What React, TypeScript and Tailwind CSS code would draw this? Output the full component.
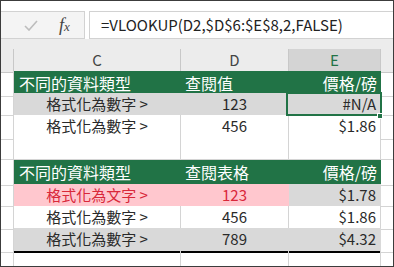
import React from "react";

const Row: React.FC<{ h: string; children: React.ReactNode }> = ({ h, children }) => (
  <div className={`grid grid-cols-[13px_167px_108px_92px_12px] ${h}`}>{children}</div>
);

const Edge: React.FC<{ left?: boolean; bottom?: boolean }> = ({ left, bottom = true }) => (
  <div
    className={`border-[#d4d4d4] ${left ? "border-r" : ""} ${bottom ? "border-b" : ""}`}
  />
);

const Cell: React.FC<{ className: string; children?: React.ReactNode }> = ({
  className,
  children,
}) => <div className={`flex items-center border-r whitespace-nowrap ${className}`}>{children}</div>;

// green table header
const HEAD = "bg-[#217346] border-[#217346] border-b-2 border-b-black text-white text-[16px]";
const GRAY = "bg-[#d9d9d9] border-[#d9d9d9] text-[#2a2a2a]";
const PINK = "bg-[#ffc7ce] border-[#ffc7ce] text-[#d9283a]";
const WHITE = "bg-white border-[#d4d4d4] border-b text-[#2a2a2a]";

const App: React.FC = () => {
  return (
    <div className="w-[394px] h-[267px] border border-[#3c3c3c] bg-white overflow-hidden flex flex-col font-['Noto_Sans_CJK_TC','Noto_Sans',sans-serif] text-[15px]">
      <div className="h-[10px] shrink-0" />

      {/* formula bar */}
      <div className="h-[28px] shrink-0 flex">
        <div className="w-[84px] bg-[#f4f4f4] border-y border-r border-[#d2d2d2] flex items-center">
          <svg width="14" height="11" viewBox="0 0 14 11" className="ml-[23px]">
            <path d="M1 6 L5 10 L13 1" fill="none" stroke="#bdbdbd" strokeWidth="1.6" />
          </svg>
          <span className="ml-[21px] italic font-['Liberation_Serif',serif] text-[#444] text-[18px] leading-none">
            f<span className="text-[13px]">x</span>
          </span>
        </div>
        <div className="flex-1 ml-[4px] bg-white border-y border-l border-[#d2d2d2] flex items-center pl-[11px] text-[#222]">
          =VLOOKUP(D2,$D$6:$E$8,2,FALSE)
        </div>
      </div>

      <div className="h-[10px] shrink-0 bg-[#ececec]" />

      {/* column headers */}
      <Row h="h-[22px] shrink-0">
        <div className="bg-[#ececec] border-r border-b border-[#c8c8c8]" />
        <div className="bg-[#ececec] border-r border-b border-[#c8c8c8] flex items-center justify-center text-[#444]">
          C
        </div>
        <div className="bg-[#ececec] border-r border-b border-[#c8c8c8] flex items-center justify-center text-[#444]">
          D
        </div>
        <div className="bg-[#d4d4d4] border-r border-b border-[#c8c8c8] flex items-center justify-center text-[#217346]">
          E
        </div>
        <div className="bg-[#ececec] border-b border-[#c8c8c8]" />
      </Row>

      {/* first table */}
      <Row h="h-[22px] shrink-0">
        <Edge left />
        <Cell className={`${HEAD} pl-[5px]`}>不同的資料類型</Cell>
        <Cell className={`${HEAD} pl-[4px]`}>查閱值</Cell>
        <Cell className={`${HEAD} justify-end pr-[3px]`}>價格/磅</Cell>
        <Edge />
      </Row>
      <Row h="h-[22px] shrink-0">
        <Edge left />
        <Cell className={`${GRAY} justify-center`}>格式化為數字 &gt;</Cell>
        <Cell className={`${GRAY} justify-center`}>123</Cell>
        <Cell className={`${GRAY} justify-end pr-[4px] relative`}>
          #N/A
          <div className="absolute -left-[3px] -top-[1px] w-[96px] h-[24px] border-2 border-[#217346]" />
          <div className="absolute -right-[3px] -bottom-[3px] w-[6px] h-[6px] bg-[#217346] border border-white" />
        </Cell>
        <Edge />
      </Row>
      <Row h="h-[23px] shrink-0">
        <Edge left />
        <Cell className={`${WHITE} border-b-2 border-b-black justify-center`}>格式化為數字 &gt;</Cell>
        <Cell className={`${WHITE} border-b-2 border-b-black justify-center`}>456</Cell>
        <Cell className={`${WHITE} border-b-2 border-b-black justify-end pr-[4px]`}>$1.86</Cell>
        <Edge />
      </Row>
      <Row h="h-[22px] shrink-0">
        <Edge left />
        <Cell className={WHITE} />
        <Cell className={WHITE} />
        <Cell className={WHITE} />
        <Edge />
      </Row>

      {/* second table */}
      <Row h="h-[24px] shrink-0">
        <Edge left />
        <Cell className={`${HEAD} pl-[5px]`}>不同的資料類型</Cell>
        <Cell className={`${HEAD} pl-[4px]`}>查閱表格</Cell>
        <Cell className={`${HEAD} justify-end pr-[3px]`}>價格/磅</Cell>
        <Edge />
      </Row>
      <Row h="h-[22px] shrink-0">
        <Edge left />
        <Cell className={`${PINK} justify-center`}>格式化為文字 &gt;</Cell>
        <Cell className={`${PINK} justify-center`}>123</Cell>
        <Cell className={`${GRAY} justify-end pr-[4px]`}>$1.78</Cell>
        <Edge />
      </Row>
      <Row h="h-[22px] shrink-0">
        <Edge left />
        <Cell className={`${WHITE} justify-center`}>格式化為數字 &gt;</Cell>
        <Cell className={`${WHITE} justify-center`}>456</Cell>
        <Cell className={`${WHITE} justify-end pr-[4px]`}>$1.86</Cell>
        <Edge />
      </Row>
      <Row h="h-[23px] shrink-0">
        <Edge left />
        <Cell className={`${GRAY} border-b-2 border-b-black justify-center`}>格式化為數字 &gt;</Cell>
        <Cell className={`${GRAY} border-b-2 border-b-black justify-center`}>789</Cell>
        <Cell className={`${GRAY} border-b-2 border-b-black justify-end pr-[4px]`}>$4.32</Cell>
        <Edge />
      </Row>
      <Row h="flex-1">
        <Edge left bottom={false} />
        <Cell className="border-[#d4d4d4]" />
        <Cell className="border-[#d4d4d4]" />
        <Cell className="border-[#d4d4d4]" />
        <Edge bottom={false} />
      </Row>
    </div>
  );
};

export default App;
